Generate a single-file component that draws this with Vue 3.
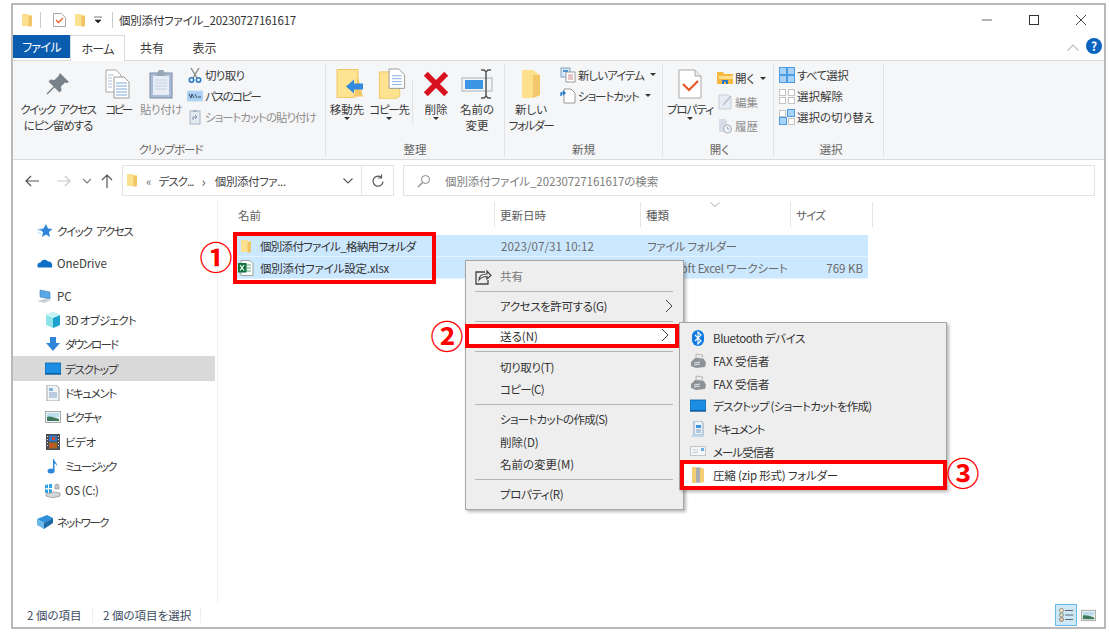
<script setup>
const sideItems = [
  { icon: 'i-star', label: 'クイック アクセス', cls: 'top', ls: 'l3 ws' },
  { icon: 'i-cloud', label: 'OneDrive', cls: 'top gap', ls: '' },
  { icon: 'i-pc', label: 'PC', cls: 'top gap', ls: '' },
  { icon: 'i-cube', label: '3D オブジェクト', cls: 'child', ls: 'l2' },
  { icon: 'i-down', label: 'ダウンロード', cls: 'child', ls: 'l5' },
  { icon: 'i-desktop', label: 'デスクトップ', cls: 'child active', ls: 'l4' },
  { icon: 'i-doc', label: 'ドキュメント', cls: 'child', ls: 'l4' },
  { icon: 'i-pic', label: 'ピクチャ', cls: 'child', ls: 'l4' },
  { icon: 'i-film', label: 'ビデオ', cls: 'child', ls: 'l1' },
  { icon: 'i-note', label: 'ミュージック', cls: 'child', ls: 'l5' },
  { icon: 'i-drive', label: 'OS (C:)', cls: 'child', ls: 'l1' },
  { icon: 'i-net', label: 'ネットワーク', cls: 'top gap', ls: 'l5' }
]
const ctxItems = [
  { label: '共有', icon: 'i-share', dim: true },
  { sep: true },
  { label: 'アクセスを許可する(G)', arrow: true, ls: 'l1' },
  { sep: true },
  { label: '送る(N)', arrow: true, hot: true },
  { sep: true },
  { label: '切り取り(T)', ls: 'l1' },
  { label: 'コピー(C)', ls: 'l2' },
  { sep: true },
  { label: 'ショートカットの作成(S)', ls: 'l2' },
  { label: '削除(D)' },
  { label: '名前の変更(M)' },
  { sep: true },
  { label: 'プロパティ(R)', ls: 'l1' }
]
const subItems = [
  { label: 'Bluetooth デバイス', icon: 'i-bt', ls: 'l1' },
  { label: 'FAX 受信者', icon: 'i-fax' },
  { label: 'FAX 受信者', icon: 'i-fax' },
  { label: 'デスクトップ (ショートカットを作成)', icon: 'i-desktop', ls: 'l2' },
  { label: 'ドキュメント', icon: 'i-doc2', ls: 'l4' },
  { label: 'メール受信者', icon: 'i-mail', ls: 'l3' },
  { label: '圧縮 (zip 形式) フォルダー', icon: 'i-zip', hot: true, ls: 'l0' }
]
</script>

<template>
  <div class="stage">
    <svg class="defs" aria-hidden="true">
      <symbol id="i-folder" viewBox="0 0 10 13"><path d="M0 0h6l1 1h3v11H0z" fill="#fbe08f"/><path d="M6.500 2H10v10l-3.500 1z" fill="#f1c566"/></symbol>
      <symbol id="i-check" viewBox="0 0 13 14"><path d="M.5.500h8l4 4v9H.5z" fill="#fff" stroke="#a8a8a8"/><path d="M3 7l2.500 2.500L10 5" fill="none" stroke="#e8602c" stroke-width="1.400"/></symbol>
      <symbol id="i-pin" viewBox="0 0 24 24"><path d="M14 1l9 9-2 1-2-.5-4 4 .5 4-2 2-5-5-7 7-1-1 7-7-5-5 2-2 4 .5 4-4L13 3z" fill="#78808a"/></symbol>
      <symbol id="i-copy" viewBox="0 0 26 30"><path d="M1 1h10l5 5v17H1z" fill="#fff" stroke="#a9a9a9"/><path d="M9 8h10l5 5v16H9z" fill="#fff" stroke="#9a9a9a"/><path d="M11 14h11M11 17h11M11 20h11M11 23h11M11 26h11" stroke="#7ea8dc"/><path d="M3 6h6M3 9h4M3 12h4M3 15h4M3 18h4" stroke="#a9bedb"/></symbol>
      <symbol id="i-paste" viewBox="0 0 24 30"><rect x="1" y="4" width="22" height="25" fill="#a9bdd9" stroke="#7d8ba0"/><rect x="4" y="7" width="16" height="19" fill="#e7edf6"/><path d="M6 11h12M6 14h12M6 17h12M6 20h12" stroke="#c6d2e2"/><path d="M8 4l2-3h4l2 3v3H8z" fill="#98a6ba"/></symbol>
      <symbol id="i-cut" viewBox="0 0 16 16"><path d="M4 1l6 10M12 1L6 11" stroke="#8a8a8a" stroke-width="1.400"/><circle cx="4.500" cy="13" r="2.200" fill="none" stroke="#2a78c6" stroke-width="1.600"/><circle cx="11.500" cy="13" r="2.200" fill="none" stroke="#2a78c6" stroke-width="1.600"/></symbol>
      <symbol id="i-path" viewBox="0 0 16 16"><rect x="0" y="3" width="16" height="10" fill="#a9d1f3" stroke="#c1d9ee"/><path d="M2 6l2 4 1-4 2 4M8 6l2 4M11 9h3" fill="none" stroke="#39506a"/></symbol>
      <symbol id="i-shortcut-paste" viewBox="0 0 16 16"><rect x="3" y="2" width="10" height="13" fill="#dfe6ef" stroke="#8c9db5"/><rect x="6" y="1" width="4" height="2" fill="#8c9db5"/><path d="M6 11V8h3M8 6l2 2-2 2" fill="none" stroke="#5a7394"/></symbol>
      <symbol id="i-moveto" viewBox="0 0 28 30"><path d="M1 1h21v25l-4 3H1z" fill="#fde38f" stroke="#eec764"/><path d="M22 8l5 20h-9z" fill="#f5c867"/><path d="M10 18l8-7v4h9v6h-9v4z" fill="#2f8ae0"/></symbol>
      <symbol id="i-copyto" viewBox="0 0 28 32"><path d="M1 4h21v25l-4 3H1z" fill="#fde38f" stroke="#eec764"/><path d="M11 1h10l6 6v14H11z" fill="#fff" stroke="#9a9a9a"/><path d="M14 8h10M14 11h10M14 14h10M14 17h10" stroke="#8cb0dc"/></symbol>
      <symbol id="i-x" viewBox="0 0 28 28"><path d="M3 3l22 22M25 3L3 25" stroke="#d7111f" stroke-width="6"/></symbol>
      <symbol id="i-rename" viewBox="0 0 32 30"><rect x="1" y="9" width="30" height="13" fill="#f2f5f8" stroke="#a8b0b8"/><rect x="4" y="11" width="18" height="9" fill="#3d95e6"/><path d="M20 1h3l2 2 2-2h3M25 3v24M20 29h3l2-2 2 2h3" fill="none" stroke="#555" stroke-width="1.500"/></symbol>
      <symbol id="i-newfolder" viewBox="0 0 20 30"><path d="M1 1h11l7 5v20l-7 3H1z" fill="#fde08c"/><path d="M12 6h7v20l-7 3z" fill="#f3c86c"/></symbol>
      <symbol id="i-newitem" viewBox="0 0 16 16"><rect x="1" y="1" width="9" height="9" fill="#d8e8f6" stroke="#7ea3c4"/><rect x="6" y="5" width="9" height="10" fill="#fff" stroke="#9a9a9a"/><path d="M3 3h5v2H3z" fill="#4f94d4"/><path d="M8 8h5M8 10h5M8 12h5" stroke="#c88c8c"/></symbol>
      <symbol id="i-shortcut" viewBox="0 0 16 16"><path d="M4 1h7l4 4v10H4z" fill="#fff" stroke="#9a9a9a"/><path d="M1 8V5h4M3 3l2 2-2 2" fill="none" stroke="#2c7ed0" stroke-width="1.500"/></symbol>
      <symbol id="i-prop" viewBox="0 0 24 30"><path d="M1 1h16l6 6v22H1z" fill="#fff" stroke="#a8a8a8"/><path d="M17 1v6h6" fill="#eee" stroke="#a8a8a8"/><path d="M5 15l6 6 9-9" fill="none" stroke="#e8592a" stroke-width="2.200"/></symbol>
      <symbol id="i-open" viewBox="0 0 16 16"><path d="M0 2h6l1 2h9v10H0z" fill="#f5b93f"/><rect x="2" y="6" width="14" height="3" fill="#fde08c"/><path d="M5 14v-4h6v4h-2v-2H7v2z" fill="#2b78c8"/></symbol>
      <symbol id="i-edit" viewBox="0 0 16 16"><path d="M2 1h9l3 3v11H2z" fill="#e3e9f1" stroke="#b8c3d0"/><path d="M6 11L14 2" stroke="#9fb0c4" stroke-width="1.500"/></symbol>
      <symbol id="i-hist" viewBox="0 0 16 16"><path d="M2 1h6l2 2v11H2z" fill="#c9d5e2"/><circle cx="10.500" cy="11" r="4" fill="#eef1f5" stroke="#8d98a5"/><path d="M10.500 9v2h2" fill="none" stroke="#8d98a5"/></symbol>
      <symbol id="i-all" viewBox="0 0 16 16"><g fill="#a8d3f7" stroke="#4b9ce2"><rect x=".5" y=".5" width="7" height="7"/><rect x="8.500" y=".5" width="7" height="7"/><rect x=".5" y="8.500" width="7" height="7"/><rect x="8.500" y="8.500" width="7" height="7"/></g></symbol>
      <symbol id="i-none" viewBox="0 0 16 16"><g fill="#fff" stroke="#c4c4c4"><rect x=".5" y="1.500" width="6" height="6"/><rect x="9.500" y="1.500" width="6" height="6"/><rect x=".5" y="9.500" width="6" height="6"/><rect x="9.500" y="9.500" width="6" height="6"/></g></symbol>
      <symbol id="i-inv" viewBox="0 0 16 16"><g stroke="#c4c4c4" fill="#fff"><rect x=".5" y="1.500" width="6" height="6"/><rect x="9.500" y="9.500" width="6" height="6"/></g><g fill="#a8d3f7" stroke="#4b9ce2"><rect x="8.500" y=".5" width="7" height="7"/><rect x=".5" y="8.500" width="7" height="7"/></g></symbol>
      <symbol id="i-star" viewBox="0 0 16 16"><path d="M9 1l2 4.500 4.500.5-3.500 3 1 5-4-2.500L5 14l1-5-5-3 5.500-.5z" fill="#2f86d8"/><path d="M0 7h5M1 10h3" stroke="#a9d4f5"/></symbol>
      <symbol id="i-cloud" viewBox="0 0 16 16"><path d="M1 12.500C-.500 10 1 7.500 3.500 7.500 4.500 4.500 9 3.500 11 6.500c3 -.5 5 2.500 4 6z" fill="#0d6fc7"/></symbol>
      <symbol id="i-pc" viewBox="0 0 16 16"><path d="M3 2l10 2v7L3 9z" fill="#58a9e6" stroke="#3f7db0" stroke-width=".6"/><path d="M0 13l8-2 6 1-7 3z" fill="#c9ced3"/></symbol>
      <symbol id="i-cube" viewBox="0 0 16 16"><path d="M8 0l7 3v10l-7 3-7-3V3z" fill="#8fe3e6"/><path d="M8 6l7-3v10l-7 3z" fill="#1aa3cf"/><path d="M8 6L1 3l7-3 7 3z" fill="#c7f3f4"/></symbol>
      <symbol id="i-down" viewBox="0 0 16 16"><path d="M5 1h6v6h4l-7 8-7-8h4z" fill="#2f86d8"/></symbol>
      <symbol id="i-desktop" viewBox="0 0 16 16"><rect x="0" y="2" width="16" height="11" fill="#1b8ee4" stroke="#0d5f9f" stroke-width=".8"/><rect x="0" y="12" width="16" height="1.500" fill="#0d5f9f"/></symbol>
      <symbol id="i-doc" viewBox="0 0 16 16"><path d="M2 0h9l3 3v13H2z" fill="#f3f4f5" stroke="#a5a5a5"/><path d="M4 3h4v3H4z" fill="#7fb2de"/><path d="M4 8h8M4 10h8M4 12h8" stroke="#7fa4c7"/></symbol>
      <symbol id="i-pic" viewBox="0 0 16 16"><rect x=".5" y="2.500" width="15" height="11" fill="#eef2f5" stroke="#a9a9a9"/><rect x="2" y="4" width="12" height="4" fill="#bcdcef"/><path d="M2 8c3-1 6 0 12 2v2H2z" fill="#3f7a5c"/></symbol>
      <symbol id="i-film" viewBox="0 0 16 16"><rect x="1" y="0" width="14" height="16" fill="#4a4f55"/><rect x="4" y="1.500" width="8" height="6" fill="#2f79c8"/><rect x="4" y="8.500" width="8" height="6" fill="#a9641f"/><path d="M7 3h3v3H7zM5 10h3v3H5z" fill="#d24a2c"/><path d="M2 2h1v1H2zM2 5h1v1H2zM2 8h1v1H2zM2 11h1v1H2zM13 2h1v1h-1zM13 5h1v1h-1zM13 8h1v1h-1zM13 11h1v1h-1z" fill="#ddd"/></symbol>
      <symbol id="i-note" viewBox="0 0 16 16"><ellipse cx="6" cy="13" rx="3.500" ry="2.500" fill="#2b88d8"/><path d="M8 13V1h1c0 3 4 4 2.500 7C11 5 9.500 5.500 9.500 5.500V13z" fill="#2b88d8"/></symbol>
      <symbol id="i-drive" viewBox="0 0 16 16"><path d="M0 3l3-.5V6L0 6.500zM4 2.300l3-.5V6L4 6zM0 7.500h3V11H0zM4 7l3 .5V11H4z" fill="#2fa4e7"/><path d="M10 7V4a2 2 0 0 1 4 0v3z" fill="#c5c5c5" stroke="#8a8a8a" stroke-width=".6"/><path d="M1 12l8-2 6 1v3l-7 2-7-2z" fill="#d4d7da" stroke="#7d7d7d" stroke-width=".6"/></symbol>
      <symbol id="i-net" viewBox="0 0 16 16"><path d="M0 5l10-4 6 3-9 5z" fill="#2f8fd8"/><path d="M0 5l7 4v6L0 11z" fill="#6bb8ea"/><path d="M7 9l9-5v5l-9 6z" fill="#1b6aa8"/></symbol>
      <symbol id="i-excel" viewBox="0 0 16 16"><path d="M3 .500h9l3 3v12H3z" fill="#fff" stroke="#9aa39c"/><path d="M8 5h5M8 8h5M8 11h5" stroke="#5f9e7a"/><rect x="0" y="3" width="8.500" height="9.500" fill="#12733f"/><path d="M2 5l4 5.500M6 5l-4 5.500" stroke="#fff" stroke-width="1.200"/></symbol>
      <symbol id="i-share" viewBox="0 0 18 18"><path d="M11 4H2v12h12v-4" fill="none" stroke="#444" stroke-width="1.300"/><path d="M5 12c0-4 3-6 8-6V3l4 4.500L13 11V8.500C9 8.500 7 9.500 5 12z" fill="none" stroke="#444" stroke-width="1.200"/></symbol>
      <symbol id="i-bt" viewBox="0 0 16 16"><rect x="2" y="0" width="12" height="16" rx="6" fill="#0f7be0"/><path d="M5 5l6 6-3 3V2l3 3-6 6" fill="none" stroke="#fff" stroke-width="1.100"/></symbol>
      <symbol id="i-fax" viewBox="0 0 16 16"><path d="M6 1l7 1-1 4-6-1z" fill="#e8e8e8" stroke="#9a9a9a" stroke-width=".6"/><path d="M1 9l4-4 9 1 2 4-1 4-9 1-5-2z" fill="#8b9298"/><path d="M4 10l6-1M4 12l6-1" stroke="#e4e6e8"/></symbol>
      <symbol id="i-doc2" viewBox="0 0 16 16"><path d="M4 0h7l2 2v12H4z" fill="#eef3f8" stroke="#8aa5c0"/><path d="M6 4h5v3H6z" fill="#3d95e0"/><path d="M6 9h5M6 11h5" stroke="#6f9cc6"/><path d="M1 14l14 0-2 2H2z" fill="#bcd8ef"/></symbol>
      <symbol id="i-mail" viewBox="0 0 16 16"><rect x=".5" y="3.500" width="15" height="9" fill="#f4f5f6" stroke="#c2c5c9"/><path d="M3 7h5M3 9.500h5" stroke="#c8ccd1"/><rect x="11" y="5" width="3" height="3" fill="#6fb0e3"/></symbol>
      <symbol id="i-zip" viewBox="0 0 12 16"><path d="M0 0h8l4 2v13l-4 1H0z" fill="#f4ce74"/><rect x="4" y="0" width="4" height="16" fill="#c9cdd2"/><path d="M4 2h4M4 4h4M4 6h4M4 8h4M4 10h4M4 12h4M4 14h4" stroke="#7b7f84" stroke-width=".8"/></symbol>
    </svg>

    <div class="window">
      <header class="titlebar">
        <svg class="t-folder"><use href="#i-folder"/></svg>
        <span class="t-sep t-sep1"></span>
        <svg class="t-check"><use href="#i-check"/></svg>
        <svg class="t-folder t-folder2"><use href="#i-folder"/></svg>
        <svg class="t-caret" viewBox="0 0 8 8"><path d="M0 1h8M1 4h6l-3 3z" fill="#222" stroke="#222" stroke-width=".6"/></svg>
        <span class="t-sep t-sep2"></span>
        <span class="t-title">個別添付ファイル_20230727161617</span>
        <div class="winctl">
          <svg viewBox="0 0 10 10"><path d="M0 5h10" stroke="#808080" stroke-width="1.200"/></svg>
          <svg viewBox="0 0 10 10"><rect x=".5" y=".5" width="9" height="9" fill="none" stroke="#333"/></svg>
          <svg viewBox="0 0 10 10"><path d="M0 0l10 10M10 0L0 10" stroke="#333" stroke-width=".9"/></svg>
        </div>
      </header>

      <nav class="tabs">
        <span class="tab file l2">ファイル</span>
        <span class="tab home l2">ホーム</span>
        <span class="tab share">共有</span>
        <span class="tab view">表示</span>
        <svg class="chev" viewBox="0 0 12 7"><path d="M.5 6.500L6 1l5.500 5.500" fill="none" stroke="#bdbdbd" stroke-width="1.100"/></svg>
        <span class="help">?</span>
      </nav>

      <section class="ribbon">
        <div class="group g-clip">
          <div class="gbody">
            <div class="big w-pin"><span class="ic"><svg class="s24"><use href="#i-pin"/></svg></span><span class="l3 ws">クイック アクセス</span><span class="l3">にピン留めする</span></div>
            <div class="big w-copy"><span class="ic"><svg class="s-tall"><use href="#i-copy"/></svg></span><span class="l6">コピー</span></div>
            <div class="big w-paste dim"><span class="ic"><svg class="s-tall"><use href="#i-paste"/></svg></span><span class="l1">貼り付け</span></div>
            <div class="smalls">
              <div class="small"><svg><use href="#i-cut"/></svg><span class="l2">切り取り</span></div>
              <div class="small"><svg><use href="#i-path"/></svg><span class="l5">パスのコピー</span></div>
              <div class="small dim"><svg><use href="#i-shortcut-paste"/></svg><span class="l3">ショートカットの貼り付け</span></div>
            </div>
          </div>
          <div class="glabel l3">クリップボード</div>
        </div>

        <div class="group g-org">
          <div class="gbody">
            <div class="big w-org"><span class="ic"><svg class="s-move"><use href="#i-moveto"/></svg></span><span>移動先</span><i class="caret"></i></div>
            <div class="big w-org"><span class="ic"><svg class="s-move"><use href="#i-copyto"/></svg></span><span class="l4">コピー先</span><i class="caret"></i></div>
            <span class="vsep"></span>
            <div class="big w-org"><span class="ic"><svg class="s-del"><use href="#i-x"/></svg></span><span>削除</span><i class="caret"></i></div>
            <div class="big w-ren"><span class="ic"><svg class="s-fold"><use href="#i-rename"/></svg></span><span>名前の</span><span>変更</span></div>
          </div>
          <div class="glabel">整理</div>
        </div>

        <div class="group g-new">
          <div class="gbody">
            <div class="big w-newf"><span class="ic"><svg class="s-tall"><use href="#i-newfolder"/></svg></span><span>新しい</span><span class="l4">フォルダー</span></div>
            <div class="smalls">
              <div class="small"><svg><use href="#i-newitem"/></svg><span class="l3">新しいアイテム</span><i class="caret inline"></i></div>
              <div class="small"><svg><use href="#i-shortcut"/></svg><span class="l3">ショートカット</span><i class="caret inline"></i></div>
            </div>
          </div>
          <div class="glabel">新規</div>
        </div>

        <div class="group g-open">
          <div class="gbody">
            <div class="big w-prop"><span class="ic"><svg class="s-tall"><use href="#i-prop"/></svg></span><span class="l3">プロパティ</span><i class="caret"></i></div>
            <div class="smalls wide">
              <div class="small"><svg><use href="#i-open"/></svg><span>開く</span><i class="caret inline"></i></div>
              <div class="small dim"><svg><use href="#i-edit"/></svg><span>編集</span></div>
              <div class="small dim"><svg><use href="#i-hist"/></svg><span>履歴</span></div>
            </div>
          </div>
          <div class="glabel">開く</div>
        </div>

        <div class="group g-sel">
          <div class="gbody">
            <div class="smalls">
              <div class="small"><svg><use href="#i-all"/></svg><span class="l2">すべて選択</span></div>
              <div class="small"><svg><use href="#i-none"/></svg><span>選択解除</span></div>
              <div class="small"><svg><use href="#i-inv"/></svg><span>選択の切り替え</span></div>
            </div>
          </div>
          <div class="glabel">選択</div>
        </div>
      </section>

      <div class="navbar">
        <svg class="nb back" viewBox="0 0 14 12"><path d="M14 6H1M6 1L1 6l5 5" fill="none" stroke="#555" stroke-width="1.200"/></svg>
        <svg class="nb fwd" viewBox="0 0 14 12"><path d="M0 6h13M8 1l5 5-5 5" fill="none" stroke="#c9c9c9" stroke-width="1.200"/></svg>
        <svg class="nb dn" viewBox="0 0 8 12"><path d="M0 4l4 4 4-4" fill="none" stroke="#777" stroke-width="1.100"/></svg>
        <svg class="nb up" viewBox="0 0 12 14"><path d="M6 14V1M1 6l5-5 5 5" fill="none" stroke="#555" stroke-width="1.200"/></svg>
        <div class="address">
          <svg class="a-folder"><use href="#i-folder"/></svg>
          <span class="a-ll">«</span>
          <span class="a-part l3">デスク...</span>
          <span class="a-gt">›</span>
          <span class="a-part l1">個別添付ファ...</span>
          <svg class="a-chev" viewBox="0 0 10 6"><path d="M.5.500L5 5l4.500-4.500" fill="none" stroke="#555" stroke-width="1.100"/></svg>
        </div>
        <div class="refresh">
          <svg viewBox="0 0 14 14"><path d="M12 7.500A5 5 0 1 1 10 3.200" fill="none" stroke="#555" stroke-width="1.200"/><path d="M10.500 .5v3.500H7" fill="none" stroke="#555" stroke-width="1.200"/></svg>
        </div>
        <div class="search">
          <svg viewBox="0 0 14 14"><circle cx="8.500" cy="5.500" r="4" fill="none" stroke="#888"/><path d="M5.500 8.500L1 13" stroke="#888" stroke-width="1.200"/></svg>
          <span>個別添付ファイル_20230727161617の検索</span>
        </div>
      </div>

      <main class="content">
        <aside class="sidebar">
          <div v-for="item in sideItems" :key="item.label" class="srow" :class="item.cls">
            <svg><use :href="'#' + item.icon"/></svg>
            <span :class="item.ls">{{ item.label }}</span>
          </div>
        </aside>
        <section class="files">
          <div class="fhead">
            <span class="c-name">名前</span>
            <span class="c-date">更新日時</span>
            <span class="c-type">種類<svg class="sort" viewBox="0 0 10 5"><path d="M.5.500L5 4.500l4.500-4" fill="none" stroke="#aaa"/></svg></span>
            <span class="c-size l2">サイズ</span>
          </div>
          <div class="frow">
            <span class="f-name"><svg class="f-fold"><use href="#i-folder"/></svg><span class="l2">個別添付ファイル_格納用フォルダ</span></span>
            <span class="f-date">2023/07/31 10:12</span>
            <span class="f-type l1">ファイル フォルダー</span>
            <span class="f-size"></span>
          </div>
          <div class="frow">
            <span class="f-name"><svg class="f-xl"><use href="#i-excel"/></svg><span class="l0">個別添付ファイル設定.xlsx</span></span>
            <span class="f-date"></span>
            <span class="f-type l0">Microsoft Excel ワークシート</span>
            <span class="f-size">769 KB</span>
          </div>
        </section>
      </main>

      <footer class="status">
        <span class="st1">2 個の項目</span>
        <span class="st2">2 個の項目を選択</span>
        <span class="st-sep"></span>
        <div class="views">
          <span class="v-on">
            <svg viewBox="0 0 20 20"><circle cx="5" cy="5" r="2.300" fill="#f3e3b5" stroke="#8a8a8a"/><circle cx="5" cy="10" r="2.300" fill="#cfe3c5" stroke="#8a8a8a"/><circle cx="5" cy="15" r="2.300" fill="#eac0a8" stroke="#8a8a8a"/><path d="M9 5h9M9 10h9M9 15h9" stroke="#555"/></svg>
          </span>
          <svg class="v-off"><use href="#i-pic"/></svg>
        </div>
      </footer>
    </div>

    <!-- red callout boxes and context menus lie over the window -->
    <div class="callout box1"></div>
    <span class="mark m1">①</span>

    <div class="menu ctx">
      <template v-for="(it, i) in ctxItems" :key="i">
        <div v-if="it.sep" class="msep"></div>
        <div v-else class="mrow" :class="{ dim: it.dim, hot: it.hot }">
          <svg v-if="it.icon" class="m-share"><use :href="'#' + it.icon"/></svg>
          <span :class="it.ls">{{ it.label }}</span>
          <svg v-if="it.arrow" class="m-arrow" viewBox="0 0 8 14"><path d="M1 1l6 6-6 6" fill="none" stroke="#444" stroke-width="1"/></svg>
        </div>
      </template>
    </div>
    <span class="mark m2">②</span>

    <div class="menu sub">
      <div v-for="(it, i) in subItems" :key="i" class="mrow srow2" :class="{ hot: it.hot }">
        <svg class="m-ic"><use :href="'#' + it.icon"/></svg>
        <span :class="it.ls">{{ it.label }}</span>
      </div>
    </div>
    <span class="mark m3">③</span>
  </div>
</template>

<style>
html, body { margin: 0; background: #fff; }
</style>

<style scoped>
.stage {
  position: relative;
  width: 1109px;
  height: 632px;
  overflow: hidden;
  background: #fff;
  font-family: "Noto Sans CJK JP", "Noto Sans", sans-serif;
  font-size: 11.500px;
  font-feature-settings: "palt";
  color: #3a3a3a;
}
.l0 { letter-spacing: -.2px; }
.l1 { letter-spacing: -.4px; }
.l2 { letter-spacing: -.7px; }
.l3 { letter-spacing: -1px; }
.l4 { letter-spacing: -1.300px; }
.l5 { letter-spacing: -1.700px; }
.l6 { letter-spacing: -2.500px; }
.ws { word-spacing: 3px; letter-spacing: -1.300px; }
.defs { position: absolute; width: 0; height: 0; }
.window {
  box-sizing: border-box;
  position: absolute;
  left: 11px;
  top: 3px;
  width: 1095px;
  height: 626px;
  border: 2px solid #b9b9b9;
  display: flex;
  flex-direction: column;
  background: #fff;
}
.titlebar { height: 30px; display: flex; align-items: center; flex: none; padding-left: 9px; }
.t-folder { width: 10px; height: 13px; }
.t-folder2 { margin-left: 9px; }
.t-sep { width: 1px; height: 16px; background: #c8c8c8; }
.t-sep1 { margin: 0 12px 0 8px; }
.t-sep2 { margin: 0 6px 0 10px; }
.t-check { width: 13px; height: 14px; }
.t-caret { width: 8px; height: 8px; margin-left: 9px; }
.t-title { font-size: 11.500px; letter-spacing: -.2px; color: #333; }
.winctl { margin-left: auto; display: flex; gap: 37px; padding-right: 18px; }
.winctl svg { width: 10px; height: 10px; }

.tabs { height: 25px; display: flex; align-items: stretch; flex: none; position: relative; }
.tab { display: flex; align-items: center; justify-content: center; font-size: 12px; box-sizing: border-box; }
.file { width: 57px; height: 23px; background: #0a5cae; color: #fff; }
.home { width: 55px; border: 1px solid #dadbdc; border-bottom: none; background: #fff; height: 26px; position: relative; z-index: 1; }
.share { width: 54px; }
.view { width: 51px; }
.chev { width: 12px; height: 7px; margin: 9px 0 0 auto; }
.help {
  width: 16px; height: 16px; border-radius: 50%; background: #0a63bf; color: #fff;
  margin: 3px 2px 0 7px; font-size: 12px; font-weight: 700; text-align: center; line-height: 16px;
}

.ribbon {
  height: 100px; flex: none; display: flex;
  background: #f5f6f7; border-top: 1px solid #dadbdc; border-bottom: 1px solid #dadbdc; box-sizing: border-box;
}
.group { display: flex; flex-direction: column; border-right: 1px solid #e2e3e4; margin: 2px 0; flex: none; box-sizing: border-box; }
.g-clip { width: 313px; padding-left: 3px; }
.g-org { width: 179px; }
.g-new { width: 158px; }
.g-open { width: 111px; padding-left: 3px; }
.g-sel { width: 110px; padding-left: 5px; }
.gbody { flex: 1; display: flex; align-items: flex-start; min-height: 0; }
.glabel { height: 15px; line-height: 15px; text-align: center; color: #666; font-size: 11.500px; flex: none; }
.big { display: flex; flex-direction: column; align-items: center; flex: none; line-height: 16px; position: relative; padding-top: 3px; white-space: nowrap; }
.big .ic { height: 35px; display: flex; align-items: center; justify-content: center; }
.w-pin { width: 84px; }
.w-copy { width: 36px; }
.w-paste { width: 50px; margin-right: 1px; }
.w-org { width: 42px; }
.w-ren { width: 40px; }
.w-newf { width: 50px; margin: 0 4px 0 1px; }
.w-prop { width: 48px; margin-right: 3px; }
.dim { color: #8f8f8f; }
.small.dim svg { opacity: .75; }
.s24 { width: 24px; height: 24px; }
.s-tall { width: 26px; height: 30px; }
.s-fold { width: 32px; height: 30px; }
.s-move { width: 28px; height: 31px; margin-left: 5px; }
.s-del { width: 26px; height: 26px; }
.vsep { width: 1px; height: 44px; background: #e2e3e4; margin: 17px 2px 0 2px; flex: none; }
.caret { position: absolute; left: 50%; margin-left: -3px; top: 54px; border: 3px solid transparent; border-top: 3px solid #333; border-bottom: none; }
.caret.inline { position: static; display: inline-block; margin: 0 0 0 4px; }
.smalls { display: flex; flex-direction: column; padding-top: 1px; }
.small { height: 21px; display: flex; align-items: center; gap: 2px; white-space: nowrap; }
.small svg { width: 16px; height: 16px; flex: none; }
.wide { padding-top: 3px; }
.wide .small { height: 24px; }

.navbar { height: 39px; flex: none; display: flex; align-items: center; padding-top: 2px; box-sizing: border-box; }
.nb { flex: none; }
.back { width: 14px; height: 12px; margin-left: 12px; }
.fwd { width: 14px; height: 12px; margin-left: 18px; }
.dn { width: 8px; height: 12px; margin-left: 12px; }
.up { width: 12px; height: 14px; margin-left: 10px; margin-right: 9px; }
.address, .refresh, .search { box-sizing: border-box; height: 31px; border: 1px solid #e3e3e3; display: flex; align-items: center; background: #fff; }
.address { width: 239px; padding-left: 4px; border-right: none; }
.a-folder { width: 10px; height: 13px; }
.a-ll { margin: 0 7px 0 9px; color: #666; }
.a-gt { margin: 0 9px 0 8px; color: #555; font-size: 14px; }
.a-part { color: #444; }
.a-chev { width: 10px; height: 6px; margin-left: auto; margin-right: 8px; }
.refresh { width: 33px; justify-content: center; }
.refresh svg { width: 14px; height: 14px; }
.search { flex: 1; margin: 0 9px; padding-left: 13px; color: #7d7d7d; }
.search svg { width: 14px; height: 14px; margin-right: 14px; }
.search span { letter-spacing: -.1px; }

.content { flex: 1; display: flex; min-height: 0; }
.sidebar { width: 205px; flex: none; box-sizing: border-box; border-right: 1px solid #f1f1f1; padding: 20px 2px 0 0; }
.srow { height: 24.300px; display: flex; align-items: center; gap: 4px; white-space: nowrap; }
.srow svg { width: 16px; height: 16px; flex: none; }
.srow.top { padding-left: 24px; }
.srow.child { padding-left: 32px; }
.srow.gap { margin-top: 8px; }
.srow.active { background: #d9d9d9; }

.files { flex: 1; min-width: 0; padding-top: 3px; }
.fhead { height: 25px; display: grid; grid-template-columns: 263px 146px 150px 82px; margin-left: 14px; align-items: stretch; color: #5d5d5d; }
.fhead span { border-right: 1px solid #e5e5e5; padding-left: 5px; display: flex; align-items: center; position: relative; }
.c-name { padding-left: 6px !important; }
.sort { position: absolute; left: 69px; top: 0; width: 10px; height: 5px; }
.frow { width: 631px; height: 22px; margin-left: 19px; display: grid; grid-template-columns: 259px 146px 150px 76px; background: #cce8ff; align-items: center; color: #6a6a6a; box-sizing: border-box; border-bottom: 1px solid #e2f2ff; white-space: nowrap; padding-top: 1px; }
.fhead + .frow { margin-top: 8px; }
.f-date, .f-type { padding-left: 5px; }
.f-date { letter-spacing: .1px; }
.f-name { display: flex; align-items: center; color: #333; }
.f-fold { width: 10px; height: 13px; margin: 0 9px 0 4px; flex: none; }
.f-xl { width: 16px; height: 16px; margin: 0 6px 0 1px; flex: none; }
.f-size { text-align: right; padding-right: 5px; }

.status { height: 24px; flex: none; display: flex; align-items: center; color: #3b4b5e; position: relative; }
.st1 { width: 80px; padding-left: 14px; box-sizing: border-box; border-right: 1px solid #eee; }
.st2 { width: 108px; padding-left: 10px; box-sizing: border-box; border-right: 1px solid #eee; }
.st-sep { flex: 1; }
.views { display: flex; align-items: center; gap: 4px; padding-right: 8px; }
.v-on { width: 22px; height: 22px; box-sizing: border-box; border: 1px solid #67b9e8; background: #cde8f8; display: flex; align-items: center; justify-content: center; }
.v-on svg { width: 18px; height: 18px; }
.v-off { width: 15px; height: 15px; }

.callout { position: absolute; box-sizing: border-box; border: 4px solid #f00; }
.box1 { left: 233px; top: 232px; width: 203px; height: 52px; z-index: 2; }
.mark { position: absolute; z-index: 6; color: #f00; font-size: 33px; font-weight: 700; line-height: 36px; width: 36px; text-align: center; font-feature-settings: normal; }
.m1 { left: 198px; top: 238px; }
.m2 { left: 429px; top: 317px; }
.m3 { left: 945px; top: 454px; }

.menu { position: absolute; box-sizing: border-box; background: #eeeeee; border: 1px solid #a5a5a5; box-shadow: 2px 2px 3px rgba(0,0,0,.28); color: #333; z-index: 3; }
.ctx { left: 465px; top: 260px; width: 219px; height: 250px; padding-top: 4px; }
.sub { left: 679px; top: 322px; width: 268px; height: 168px; padding-top: 4px; z-index: 4; }
.mrow { height: 22.500px; display: flex; align-items: center; padding-left: 34px; position: relative; white-space: nowrap; box-sizing: border-box; }
.mrow.dim { color: #777; }
.msep { height: 1px; margin: 3.250px 10px 3.250px 9px; background: #b5b5b5; }
.m-share { position: absolute; left: 8px; top: 3px; width: 18px; height: 18px; }
.m-arrow { position: absolute; right: 10px; top: 4px; width: 8px; height: 14px; }
.mrow.hot { background: #fff; outline: 4px solid #f00; outline-offset: -4px; }
.ctx .mrow.hot { margin: -1px -1px 0 -1px; width: 214px; padding-left: 35px; height: 24px; }
.srow2 { height: 22.700px; padding-left: 33px; }
.srow2.hot { height: 30px; margin: -3px -1px 0 0; padding-left: 33px; }
.m-ic { position: absolute; left: 10px; top: 3px; width: 16px; height: 16px; }
.srow2.hot .m-ic { top: 7px; }
</style>
